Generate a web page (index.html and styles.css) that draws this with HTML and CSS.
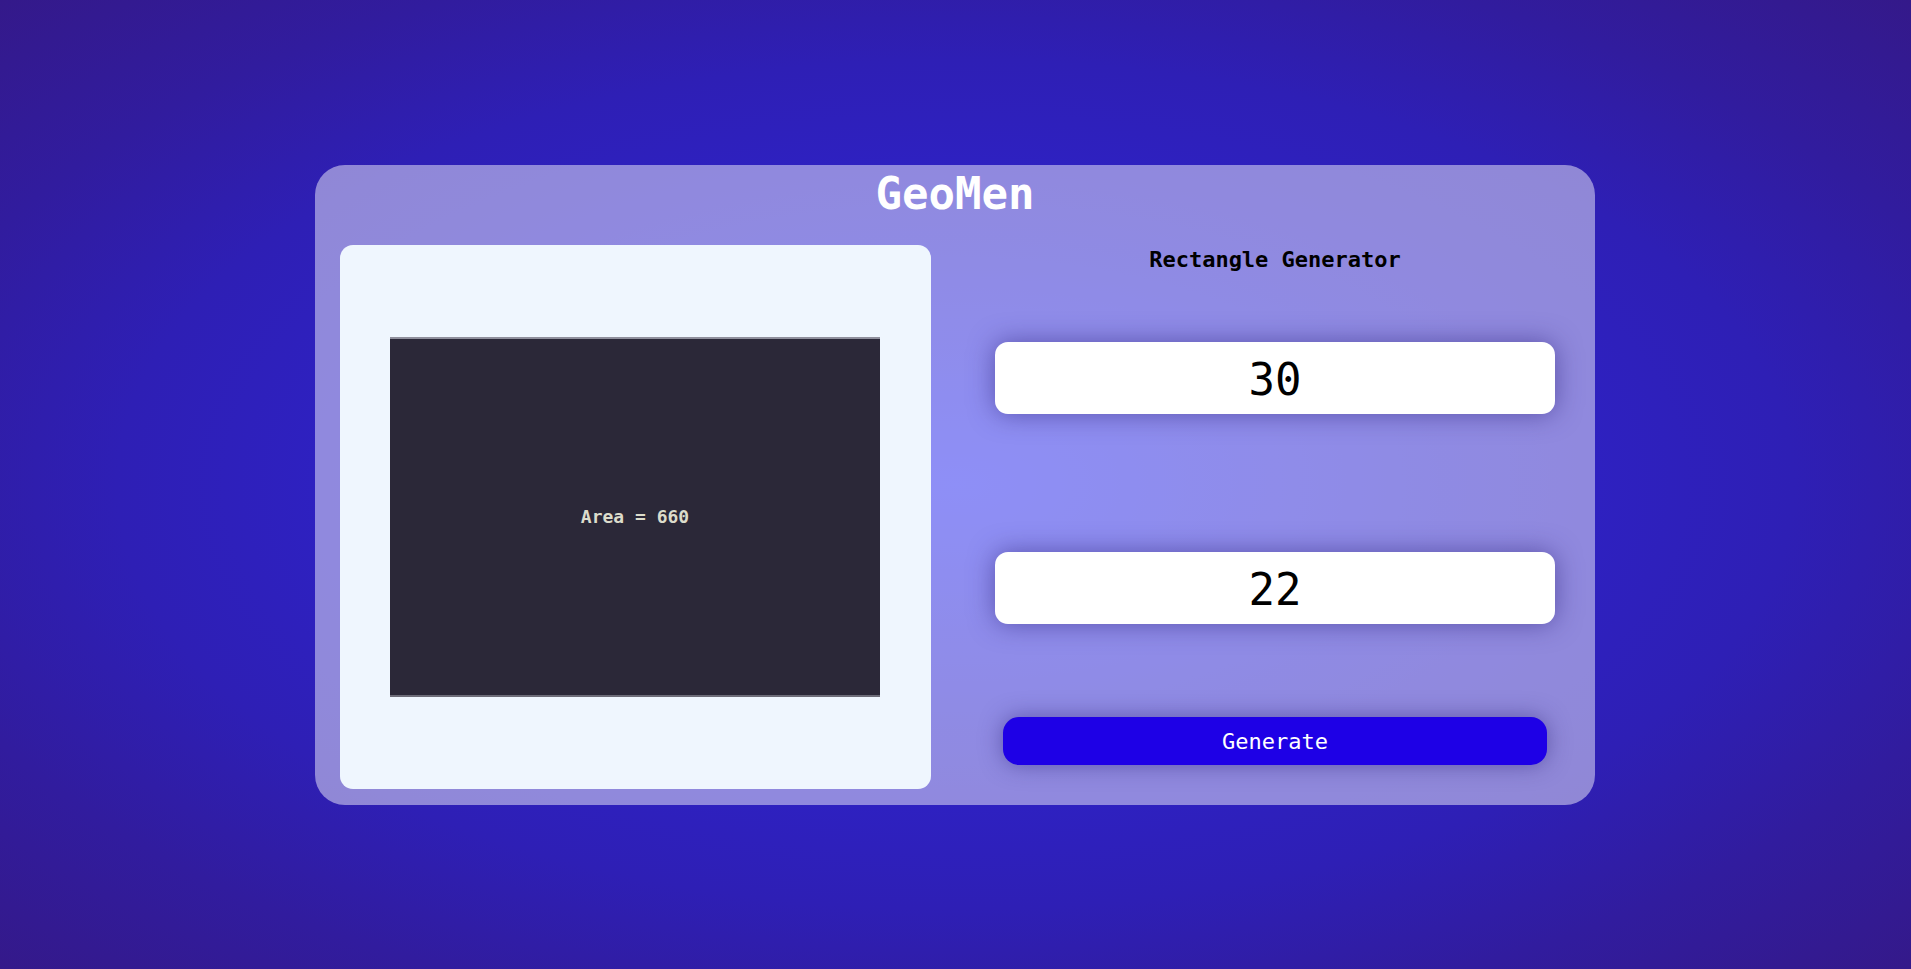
FILE: index.html
```html
<!DOCTYPE html>
<html lang="en">
<head>
<meta charset="utf-8">
<title>GeoMen</title>
<link rel="stylesheet" href="styles.css">
</head>
<body>
<main class="card">
  <h1 class="title">GeoMen</h1>
  <div class="content">
    <section class="preview">
      <div class="shape">
        <span class="area">Area = 660</span>
      </div>
    </section>
    <section class="controls">
      <h3 class="heading">Rectangle Generator</h3>
      <input class="field field-first" type="text" value="30">
      <input class="field field-second" type="text" value="22">
      <button class="generate" type="button">Generate</button>
    </section>
  </div>
</main>
</body>
</html>
```
FILE: styles.css
```css
html, body {
  margin: 0;
  padding: 0;
  height: 100%;
}

body {
  min-height: 100vh;
  display: flex;
  align-items: center;
  justify-content: center;
  font-family: "DejaVu Sans Mono", "Liberation Mono", monospace;
  background: radial-gradient(ellipse farthest-corner at center,
    #2a2cf0 0%, #2c26d6 25%, #2e21c2 45%, #2e1fb5 62%, #311c9e 80%, #34198a 100%);
}

.card {
  box-sizing: border-box;
  width: 1280px;
  height: 640px;
  margin-right: 1px;
  border-radius: 30px;
  background: rgba(255, 255, 255, 0.47);
  padding: 0 0 16px;
  display: flex;
  flex-direction: column;
}

.title {
  margin: 0 0 22px;
  height: 58px;
  line-height: 58px;
  text-align: center;
  color: #ffffff;
  font-size: 44px;
  font-weight: bold;
}

.content {
  flex: 1;
  display: grid;
  grid-template-columns: 1fr 1fr;
}

.preview {
  justify-self: center;
  width: 591px;
  height: 544px;
  background: #eff6fe;
  border-radius: 13px;
  display: flex;
  align-items: center;
  justify-content: center;
}

.shape {
  box-sizing: border-box;
  width: 490px;
  height: 360px;
  background: #2b2838;
  border-top: 2px solid #8f8f9c;
  border-bottom: 2px solid #6d6c78;
  display: flex;
  align-items: center;
  justify-content: center;
}

.area {
  color: #dcdccb;
  font-size: 18px;
  font-weight: bold;
}

.controls {
  display: flex;
  flex-direction: column;
  align-items: center;
}

.heading {
  margin: 2px 0 0;
  height: 26px;
  line-height: 26px;
  font-size: 22px;
  font-weight: bold;
  color: #000000;
}

.field {
  box-sizing: border-box;
  width: 560px;
  height: 72px;
  border: none;
  outline: none;
  border-radius: 13px;
  background: #ffffff;
  text-align: center;
  font-family: "DejaVu Sans Mono", "Liberation Mono", monospace;
  font-size: 44px;
  color: #000000;
  padding: 3px 0 0;
  box-shadow: 0 0 26px rgba(45, 35, 120, 0.55);
}

.field-first {
  margin-top: 69px;
}

.field-second {
  margin-top: 138px;
}

.generate {
  margin-top: 93px;
  width: 544px;
  height: 48px;
  border: none;
  border-radius: 16px;
  background: #1e00e6;
  color: #ffffff;
  font-family: "DejaVu Sans Mono", "Liberation Mono", monospace;
  font-size: 22px;
  padding: 1px 0 0;
  box-shadow: 0 0 22px rgba(45, 35, 120, 0.5);
  cursor: pointer;
}
```
